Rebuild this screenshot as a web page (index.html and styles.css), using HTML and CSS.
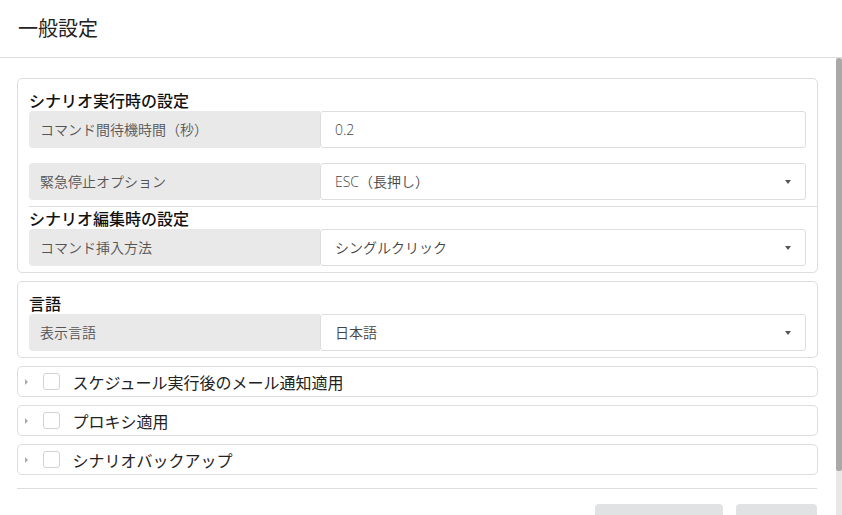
FILE: index.html
```html
<!DOCTYPE html>
<html lang="ja">
<head>
<meta charset="utf-8">
<title>一般設定</title>
<link rel="stylesheet" href="styles.css">
</head>
<body>
<header class="page-header">一般設定</header>
<div class="body-row">
  <main class="content">
    <section class="card">
      <div class="section">
        <div class="section-title">シナリオ実行時の設定</div>
        <div class="rows">
          <div class="row">
            <div class="label">コマンド間待機時間（秒）</div>
            <div class="field">0.2</div>
          </div>
          <div class="row">
            <div class="label">緊急停止オプション</div>
            <div class="field select"><span>ESC（長押し）</span><i class="caret"></i></div>
          </div>
        </div>
      </div>
      <div class="section">
        <div class="section-title">シナリオ編集時の設定</div>
        <div class="rows">
          <div class="row">
            <div class="label">コマンド挿入方法</div>
            <div class="field select"><span>シングルクリック</span><i class="caret"></i></div>
          </div>
        </div>
      </div>
    </section>
    <section class="card">
      <div class="section">
        <div class="section-title">言語</div>
        <div class="rows">
          <div class="row">
            <div class="label">表示言語</div>
            <div class="field select"><span>日本語</span><i class="caret"></i></div>
          </div>
        </div>
      </div>
    </section>
    <div class="collapse"><i class="arrow"></i><span class="check"></span><span class="collapse-text">スケジュール実行後のメール通知適用</span></div>
    <div class="collapse"><i class="arrow"></i><span class="check"></span><span class="collapse-text">プロキシ適用</span></div>
    <div class="collapse"><i class="arrow"></i><span class="check"></span><span class="collapse-text">シナリオバックアップ</span></div>
    <footer class="footer">
      <button class="btn btn-wide" aria-label="保存"></button>
      <button class="btn btn-narrow" aria-label="閉じる"></button>
    </footer>
  </main>
  <div class="scrollbar"><div class="thumb"></div></div>
</div>
</body>
</html>
```
FILE: styles.css
```css
* { box-sizing: border-box; }
html, body {
  margin: 0;
  padding: 0;
  width: 842px;
  height: 515px;
  overflow: hidden;
  background: #fff;
  font-family: "Open Sans", "Noto Sans CJK JP", sans-serif;
  color: #222;
}
.page-header {
  height: 58px;
  border-bottom: 1px solid #dedede;
  padding-left: 18px;
  font-size: 20px;
  line-height: 56px;
  color: #222;
  font-family: "Noto Sans CJK JP", sans-serif;
}
.body-row {
  display: flex;
  height: 457px;
}
.content {
  flex: 1;
  padding: 20px 18px 0 17px;
  display: flex;
  flex-direction: column;
  gap: 8px;
  overflow: hidden;
}
.card {
  border: 1px solid #dddddd;
  border-radius: 5px;
  padding-left: 11px;
  flex-shrink: 0;
}
.section {
  padding: 0 0 6px 0;
  border-bottom: 1px solid #dddddd;
}
.section:first-child { padding-top: 10px; }
.section:last-child { border-bottom: none; }
.section-title {
  font-family: "Noto Sans CJK JP", sans-serif;
  font-size: 16px;
  font-weight: 500;
  line-height: 22px;
  color: #111;
}
.rows {
  display: flex;
  flex-direction: column;
  gap: 15px;
  margin-right: 11px;
}
.row {
  display: flex;
  height: 37px;
}
.label {
  width: 291px;
  flex-shrink: 0;
  background: #e9e9e9;
  border-radius: 4px 0 0 4px;
  padding-left: 11px;
  font-size: 14px;
  font-weight: 350;
  line-height: 36px;
  color: #555;
  font-family: "Noto Sans CJK JP", sans-serif;
}
.field {
  flex: 1;
  border: 1px solid #dddddd;
  border-radius: 3px;
  padding: 0 14px 0 14px;
  font-size: 14px;
  font-weight: 350;
  line-height: 35px;
  color: #444;
  font-family: "Open Sans", "Noto Sans CJK JP", sans-serif;
}
.select {
  display: flex;
  align-items: center;
  justify-content: space-between;
}
.caret {
  width: 0;
  height: 0;
  border-left: 3px solid transparent;
  border-right: 3px solid transparent;
  border-top: 4px solid #555;
}
.collapse {
  height: 31px;
  flex-shrink: 0;
  border: 1px solid #dddddd;
  border-radius: 5px;
  display: flex;
  align-items: center;
  padding-left: 7px;
}
.arrow {
  width: 0;
  height: 0;
  border-top: 3.5px solid transparent;
  border-bottom: 3.5px solid transparent;
  border-left: 3.5px solid #aaaaaa;
}
.check {
  width: 17px;
  height: 17px;
  border: 1px solid #d3d3d3;
  border-radius: 3px;
  margin-left: 14.5px;
  background: #fff;
}
.collapse-text {
  margin-left: 13px;
  font-family: "Noto Sans CJK JP", sans-serif;
  font-size: 16px;
  color: #222;
}
.footer {
  margin-top: 5px;
  border-top: 1px solid #dddddd;
  padding-top: 15px;
  margin-right: 1px;
  display: flex;
  justify-content: flex-end;
  gap: 13px;
  flex-shrink: 0;
}
.btn {
  height: 34px;
  border: none;
  border-radius: 4px;
  background: #e1e2e4;
  padding: 0;
}
.btn-wide { width: 128px; }
.btn-narrow { width: 81px; }
.scrollbar {
  width: 6px;
  flex-shrink: 0;
  background: #e8e8e8;
  display: flex;
  flex-direction: column;
}
.thumb {
  height: 413px;
  background: #a9a9a9;
  border-radius: 3px 3px 2px 2px;
}
```
